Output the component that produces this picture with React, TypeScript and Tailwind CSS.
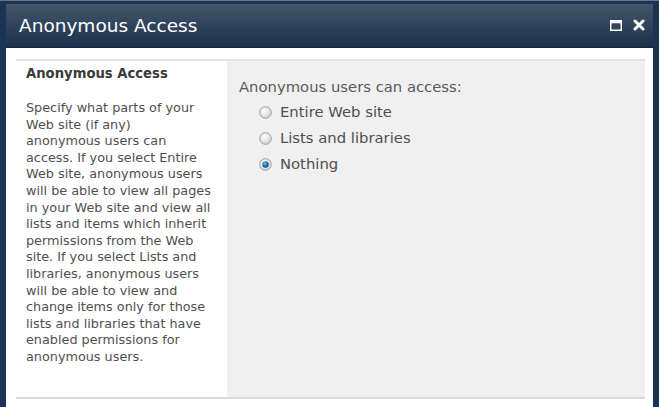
import React from "react";

function Radio({ checked }: { checked?: boolean }) {
  return (
    <svg width="13" height="13" viewBox="0 0 13 13" className="shrink-0">
      <defs>
        <radialGradient id={checked ? "rgc" : "rgu"} cx="40%" cy="35%" r="70%">
          <stop offset="0%" stopColor="#ffffff" />
          <stop offset="100%" stopColor="#d0d0d0" />
        </radialGradient>
        <radialGradient id="dot" cx="40%" cy="35%" r="70%">
          <stop offset="0%" stopColor="#6fc3f0" />
          <stop offset="60%" stopColor="#1a6aa8" />
          <stop offset="100%" stopColor="#0d3f6a" />
        </radialGradient>
      </defs>
      <circle cx="6.5" cy="6.5" r="5.8" fill={`url(#${checked ? "rgc" : "rgu"})`} stroke="#a0a0a0" strokeWidth="1" />
      {checked && <circle cx="6.5" cy="6.5" r="3.2" fill="url(#dot)" />}
    </svg>
  );
}

const lines = [
  "Specify what parts of your",
  "Web site (if any)",
  "anonymous users can",
  "access. If you select Entire",
  "Web site, anonymous users",
  "will be able to view all pages",
  "in your Web site and view all",
  "lists and items which inherit",
  "permissions from the Web",
  "site. If you select Lists and",
  "libraries, anonymous users",
  "will be able to view and",
  "change items only for those",
  "lists and libraries that have",
  "enabled permissions for",
  "anonymous users.",
];

export default function App() {
  const font = { fontFamily: '"DejaVu Sans", Verdana, sans-serif' };
  return (
    <div className="w-[659px] h-[407px] overflow-hidden bg-[#1b3454] flex flex-col pt-[3px] pl-[6px] pr-[6px] border-t border-t-[#6b7787]" style={font}>
      <div className="h-[44px] shrink-0 flex items-center justify-between pl-[13px] pr-[8px] bg-gradient-to-b from-[#45566b] via-[#2f435b] to-[#1c3149] border-b border-[#16283e]">
        <span className="text-white text-[18.5px]">Anonymous Access</span>
        <div className="flex items-center gap-[11px] mb-[1px]">
          <svg width="12" height="11" viewBox="0 0 12 11">
            <rect x="0.75" y="0.75" width="10.5" height="9.5" fill="none" stroke="#ffffff" strokeWidth="1.5" />
            <rect x="0.75" y="0.75" width="10.5" height="2.5" fill="#ffffff" />
          </svg>
          <svg width="12" height="12" viewBox="0 0 12 12">
            <path d="M2 2 L10 10 M10 2 L2 10" stroke="#ffffff" strokeWidth="3" strokeLinecap="round" />
          </svg>
        </div>
      </div>
      <div className="flex-1 bg-white pt-[11px] pl-[10px] pr-[8px] flex flex-col">
        <div className="flex h-[340px] border-t-2 border-b-2 border-t-[#e4e4e4] border-b-[#d9d9d9]">
          <div className="w-[211px] shrink-0 pl-[10px] pt-[5px]">
            <div className="text-[13.2px] font-bold text-[#3a3a3a] leading-[16px]">Anonymous Access</div>
            <div className="mt-[18px] text-[12.8px] leading-[16.6px] text-[#4f4f4f]">
              {lines.map((l) => (
                <div key={l} className="whitespace-nowrap">{l}</div>
              ))}
            </div>
          </div>
          <div className="flex-1 bg-[#f0f0f0] pl-[12px] pt-[16px]">
            <div className="text-[14.8px] text-[#5a5a5a] leading-[20px]">Anonymous users can access:</div>
            <div className="mt-[5px] pl-[20px] flex flex-col gap-[6px]">
              {["Entire Web site", "Lists and libraries", "Nothing"].map((l, i) => (
                <div key={l} className="flex items-center gap-[8px] h-[20px]">
                  <Radio checked={i === 2} />
                  <span className="text-[14.8px] text-[#4f4f4f]">{l}</span>
                </div>
              ))}
            </div>
          </div>
        </div>
      </div>
    </div>
  );
}
